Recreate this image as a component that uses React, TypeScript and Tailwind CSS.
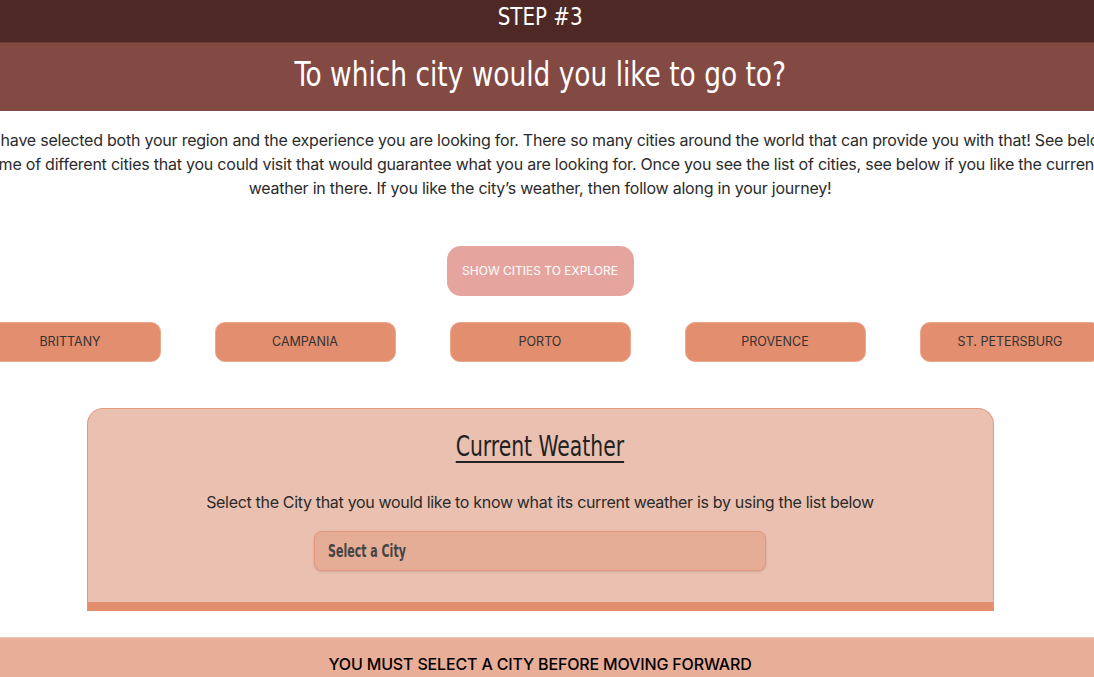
const cities = ['Brittany', 'Campania', 'Porto', 'Provence', 'St. Petersburg'];

const display = { fontFamily: '"DejaVu Sans Condensed", "Liberation Sans", sans-serif' };
const body = { fontFamily: 'Inter, "Liberation Sans", sans-serif' };

export default function App() {
  return (
    <div className="w-[1094px] min-h-[677px] overflow-hidden bg-white text-[#222]" style={body}>
      <header className="h-[42px] bg-[#4d2824]">
        <div className="w-[1080px] pt-[4px] text-center text-[24px] leading-[26px] font-light text-white" style={display}>
          <span className="inline-block scale-x-[0.92]">STEP #3</span>
        </div>
      </header>
      <div className="h-[69px] border-t border-[#6b3a34] bg-[#834a43]">
        <div className="w-[1080px] pt-[12px] text-center text-[33px] leading-[40px] font-light text-white" style={display}>
          <span className="inline-block scale-x-[0.89]">To which city would you like to go to?</span>
        </div>
      </div>

      <div className="flex w-[1080px] justify-center pt-[17px]">
        <p className="w-[1300px] shrink-0 whitespace-nowrap text-center text-[16px] leading-[24px] tracking-[-0.014em] text-[#2b2b2b]">
          You have selected both your region and the experience you are looking for. There so many cities around the world that can provide you with that! See below
          <br />
          some of different cities that you could visit that would guarantee what you are looking for. Once you see the list of cities, see below if you like the current
          <br />
          weather in there. If you like the city’s weather, then follow along in your journey!
        </p>
      </div>

      <div className="flex w-[1080px] justify-center pt-[46px]">
        <button type="button" className="h-[50px] w-[187px] rounded-[14px] bg-[#e5a59e] text-[12px] text-white uppercase">
          Show cities to explore
        </button>
      </div>

      <div className="flex w-[1080px] justify-center gap-[54px] pt-[26px]">
        {cities.map((c) => (
          <button
            key={c}
            type="button"
            className="h-[40px] w-[181px] shrink-0 rounded-[10px] border border-[#eaa88c] bg-[#e28e6f] pt-px text-[12.5px] text-[#333] uppercase"
          >
            {c}
          </button>
        ))}
      </div>

      <div className="flex w-[1080px] justify-center pt-[46px]">
        <section className="flex h-[203px] w-[907px] flex-col items-center rounded-t-[16px] border border-[#e39c82] border-b-[9px] border-b-[#e28e6f] bg-[#eac0b0]">
          <h2 className="pt-[20px] text-[29px] leading-[34px] text-[#222]" style={display}>
            <span className="inline-block scale-x-[0.78] underline decoration-2 underline-offset-[5px]">Current Weather</span>
          </h2>
          <p className="pt-[27px] text-[16px] leading-[24px] tracking-[-0.02em] text-[#2b2b2b]">
            Select the City that you would like to know what its current weather is by using the list below
          </p>
          <div className="mt-[17px] flex h-[40px] w-[452px] items-center rounded-[8px] border border-[#e5967a] bg-[#e5ac96] px-[13px] pt-px shadow-sm">
            <span className="inline-block origin-left scale-x-[0.72] text-[17px] font-bold text-[#444]" style={display}>
              Select a City
            </span>
          </div>
        </section>
      </div>

      <div className="mt-[26px] h-[60px] border-t border-[#f0c6b6] bg-[#e9ae98]">
        <div className="w-[1080px] pt-[14px] text-center text-[16px] font-medium tracking-[-0.01em] text-black uppercase">
          You must select a city before moving forward
        </div>
      </div>
    </div>
  );
}
